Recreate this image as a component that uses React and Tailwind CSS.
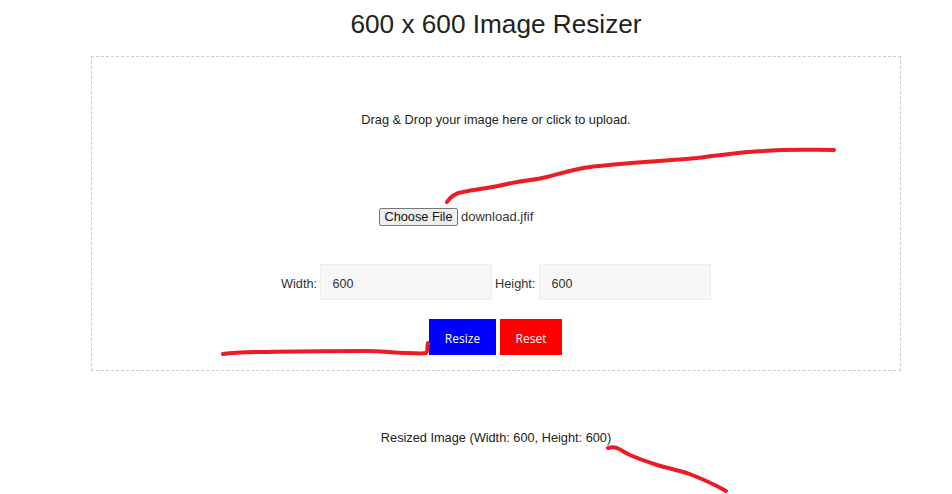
export default function App() {
  return (
    <div className="relative h-[494px] overflow-hidden bg-white font-['Liberation_Sans',sans-serif] text-[#333]">
      <div className="ml-[91px] w-[810px]">
        <h1 className="h-[56px] pt-[8px] text-center text-[26.2px] leading-[32px] font-normal text-[#222]">600 x 600 Image Resizer</h1>
        <div className="h-[315px] border border-dashed border-[#ccc]">
          <p className="mt-[55px] text-center text-[12.75px] leading-[16px] text-[#222]">Drag &amp; Drop your image here or click to upload.</p>
          <div className="mt-[80px] flex h-[18px] items-center pl-[287px]">
            <button className="h-[18px] w-[79px] rounded-[2px] border border-[#767676] bg-[#efefef] text-[12.75px] leading-[14px] text-[#111]">Choose File</button>
            <span className="ml-[3px] text-[13px] text-[#333]">download.jfif</span>
          </div>
          <div className="mt-[38px] flex h-[36px] items-center pl-[189px] text-[12.75px]">
            <label className="w-[39px] pt-[3px] text-[#333]">Width:</label>
            <input readOnly value="600" className="h-[36px] w-[172px] border border-[#eee] bg-[#f7f7f7] px-[11.5px] pt-[4px] text-[12.5px] text-[#333] outline-none" />
            <label className="ml-[3px] w-[44px] pt-[3px] text-[#333]">Height:</label>
            <input readOnly value="600" className="h-[36px] w-[172px] border border-[#eee] bg-[#f7f7f7] px-[11.5px] pt-[4px] text-[12.5px] text-[#333] outline-none" />
          </div>
          <div className="mt-[19px] flex gap-[4px] pl-[337px] font-['Open_Sans',sans-serif] text-[12px] text-white">
            <button className="h-[36px] w-[67px] bg-[#0000ff] pt-[3px]">Resize</button>
            <button className="h-[36px] w-[62px] bg-[#ff0000] pt-[3px]">Reset</button>
          </div>
        </div>
        <p className="mt-[59px] text-center text-[12.75px] leading-[16px] text-[#222]">Resized Image (Width: 600, Height: 600)</p>
      </div>

      {/* red pen marks drawn over the page */}
      <svg className="pointer-events-none absolute top-0 left-0" width="952" height="494" fill="none" stroke="#ed1c24" strokeWidth="4" strokeLinecap="round" strokeLinejoin="round">
        <path d="M447 202C451 196 456 193 463 192C475 189 492 188 507 184C520 181 535 180 547 177C562 173 575 169 590 167C625 163 665 161 697 158C720 155 742 152 763 151C790 149 810 150 834 150" />
        <path d="M223 354C237 352 250 352 267 352C300 351 335 351 367 351C380 351 395 353 407 353C415 353 422 354 426 353C428 352 427 347 428 343" />
        <path d="M608 448C611 447 614 447 617 448C622 450 625 453 630 455C639 459 648 462 657 465C667 468 677 470 687 473C700 478 714 484 726 491" />
      </svg>
    </div>
  );
}
